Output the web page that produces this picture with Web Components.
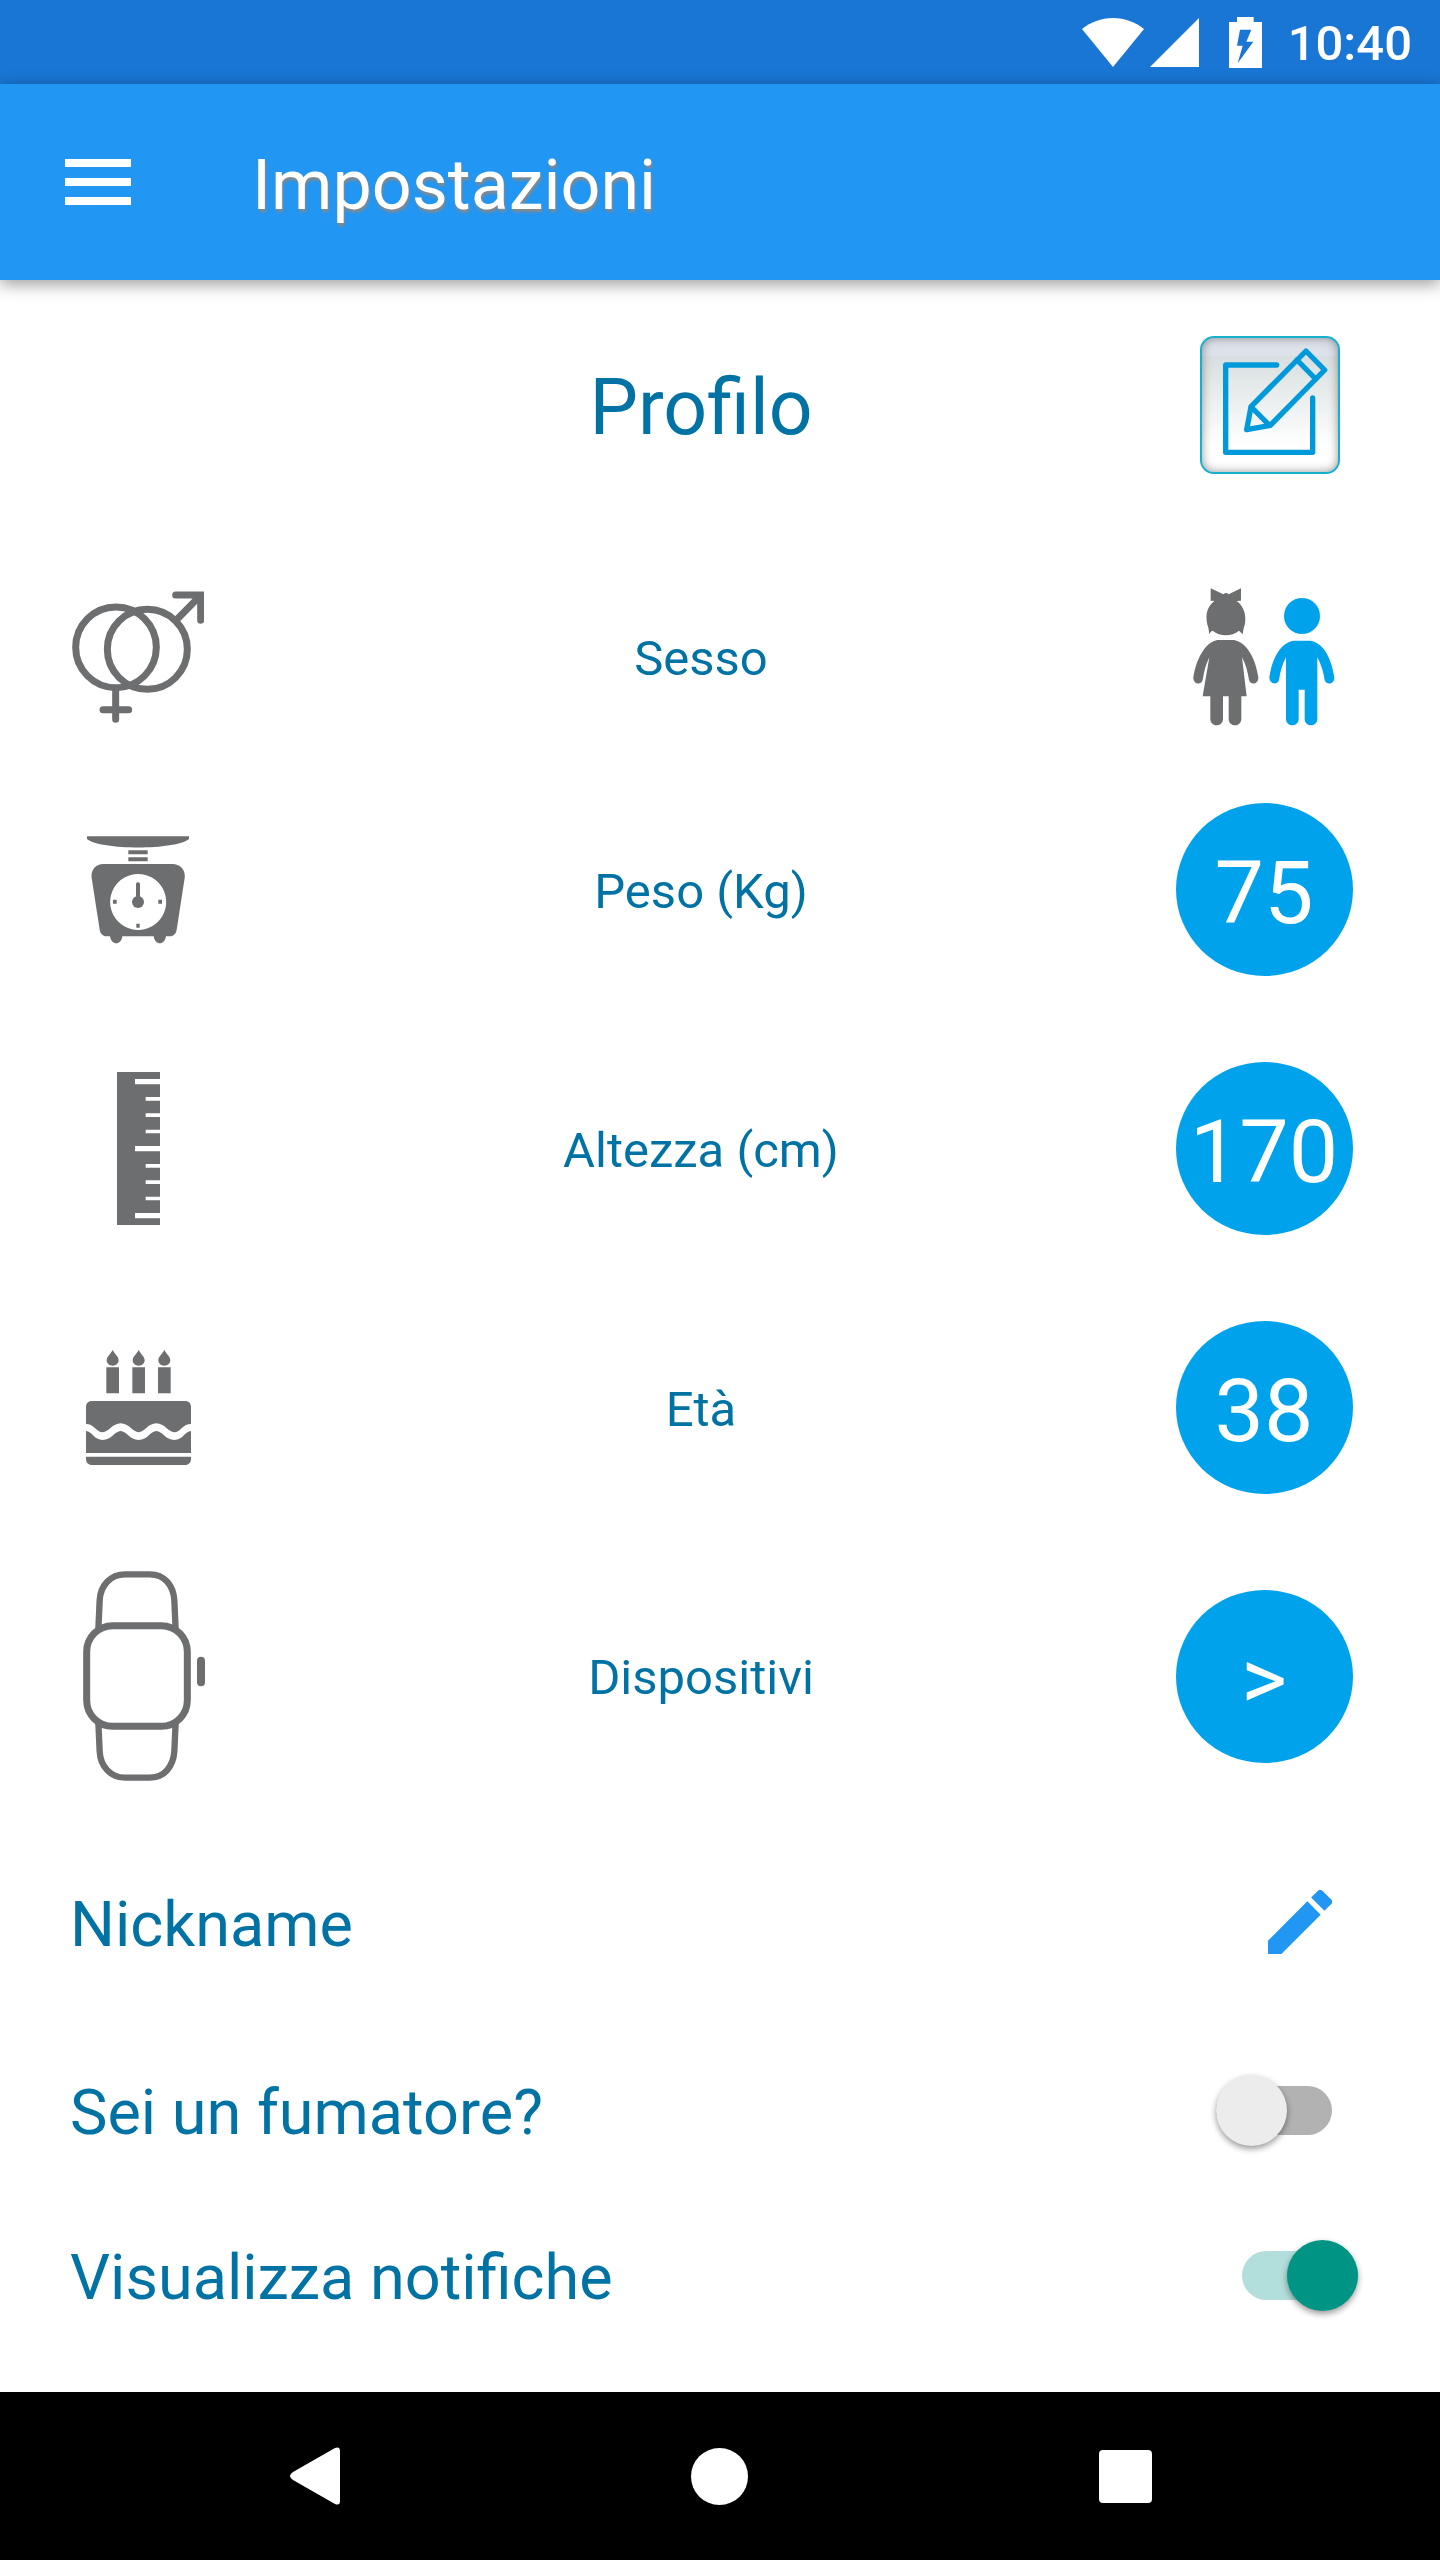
<!DOCTYPE html>
<html lang="it">
<head>
<meta charset="utf-8">
<meta name="viewport" content="width=device-width, initial-scale=1">
<title>Impostazioni</title>
<style>
  body {
    margin: 0;
    background: #fff;
    font-family: Roboto, "Noto Sans", sans-serif;
  }
</style>
</head>
<body>
<settings-app></settings-app>

<script>
const html = String.raw;

const ICONS = {
  wifi: {
    w: 62, h: 49, box: '0 0 62 49',
    body: '<path d="M31 49L0 11C9 4 19 0 31 0s22 4 31 11z"/>'
  },
  signal: {
    w: 49, h: 49, box: '0 0 49 49',
    body: '<path d="M0 49L49 0v49z"/>'
  },
  battery: {
    w: 33, h: 51, box: '507 48 99 153',
    body: '<path fill-rule="evenodd" d="M531 48h50v15h25v138h-99V63h24zM540 86l-9 48h17l-15 53 47-65h-21l15-36z"/>'
  },
  menu: {
    w: 66, h: 47, box: '0 0 66 47',
    body: '<path d="M0 0h66v8H0zM0 19h66v8H0zM0 38h66v8H0z"/>'
  },
  // fills the whole button, the drawing sits up and to the right in it
  compose: {
    w: 136, h: 134, box: '126 83 408 402',
    body: html`<g fill="none" stroke="currentColor" stroke-width="16" stroke-linecap="round" stroke-linejoin="round">
      <path d="M350 164H197v262h261V263"/>
      <path d="M438 122l56 57-163 166-71 13 13-69z"/>
      <path d="M411 149l56 57M274 290l52 53"/>
    </g>`
  },
  gender: {
    w: 132, h: 132, box: '69 61 396 396',
    body: html`<g fill="none" stroke="currentColor" stroke-width="21" stroke-linecap="round">
      <circle cx="201" cy="230" r="121"/>
      <circle cx="295" cy="236" r="120"/>
      <path d="M200 358v88M162 417h77M385 145l66-67M380 73h75v76"/>
    </g>`
  },
  kids: {
    w: 142, h: 138, box: '71 53 426 414',
    body: html`
      <path d="M124 54l38 18c5-5 11-5 16 0l37-18v37l-13 1c16 12 26 30 26 52 0 15-2 22-5 30l-3 18-11-11c-22 18-57 18-79 0-5 2-7 5-10 11l-3-20c-10-30-8-60 18-80l-11-1z"/>
      <path d="M144 209h50c42 8 66 62 73 112 1 21-23 25-28 8-4-26-10-48-21-68l14 117h-16v69c-2 24-36 24-38 0v-69h-17v69c-2 24-36 24-38 0v-69h-23l20-117c-10 20-16 42-20 68-5 17-29 13-28-8 8-50 32-104 72-112z"/>
      <g fill="#00a3eb">
        <circle cx="398" cy="137" r="54"/>
        <path d="M373 211h50c42 6 65 60 72 110 1 21-24 25-29 8-4-25-11-48-22-68v186c-2 24-36 24-38 0v-89h-18v89c-2 24-36 24-38 0V261c-11 20-17 43-21 68-5 17-29 13-29-8 7-50 31-104 73-110z"/>
      </g>`
  },
  scale: {
    w: 102, h: 108, box: '84 77 306 324',
    body: html`
      <path d="M84 78h306v8c-40 34-266 34-306 0z"/>
      <path d="M208 120h58v12h-58zM208 141h58v12h-58z"/>
      <path fill-rule="evenodd" d="M133 161h207c25 1 40 18 37 42l-24 155c-2 12-9 20-22 20h-10c-4 28-33 28-37 0h-94c-3 28-33 28-37 0h-9c-12 0-20-8-22-20L98 203c-3-24 11-41 35-42zM237 191a84 84 0 1 0 1 0z"/>
      <path d="M162 268h11v12h-11zM298 268h11v12h-11zM232 340h10v12h-10z"/>
      <circle cx="237" cy="275" r="18"/>
      <path d="M231 221c1-7 11-7 12 0v45h-12z"/>`
  },
  ruler: {
    w: 43, h: 153, box: '171 66 129 459',
    body: html`<path d="M171 66h129v21h-75v16h75v38h-43v11h43v38h-43v11h43v38h-43v11h43v38h-75v16h75v38h-43v11h43v38h-43v11h43v38h-43v11h43v38h-75v16h75v20H171z"/>`
  },
  cake: {
    w: 105, h: 115, box: '78 60 315 345',
    body: html`
      <path d="M158 60c7 13 18 20 18 31 0 9-7 16-18 16s-18-7-18-16c0-11 11-18 18-31zM236 60c7 13 18 20 18 31 0 9-7 16-18 16s-18-7-18-16c0-11 11-18 18-31zM313 60c7 13 18 20 18 31 0 9-7 16-18 16s-18-7-18-16c0-11 11-18 18-31z"/>
      <path d="M139 112h38v78h-38zM217 112h38v78h-38zM294 112h38v78h-38z"/>
      <path d="M96 213h279c11 0 18 7 18 18v51c-26 0-32 25-50 25s-29-27-54-27-36 27-53 27-29-27-54-27-36 27-54 27-25-25-50-25v-51c0-11 7-18 18-18z"/>
      <path d="M78 303c18 0 24 27 50 27 27 0 36-27 54-27s27 27 54 27 35-27 53-27 28 27 54 27 32-27 50-27v66H78z"/>
      <path d="M78 380h315v7c0 11-7 18-18 18H96c-11 0-18-7-18-18z"/>`
  },
  // the box is wider on the left, so that the case and not the crown is centred
  watch: {
    w: 134, h: 210, box: '33 66 402 630',
    body: html`<g fill="none" stroke="currentColor" stroke-width="21">
      <rect x="80" y="230" width="302" height="302" rx="78"/>
      <path stroke-width="19" d="M115 242l4-88c2-45 33-78 76-78h75c43 0 70 33 73 78l4 88M115 520l4 87c2 45 33 79 76 79h75c43 0 70-34 73-79l4-87"/>
      <path stroke-width="24" stroke-linecap="round" d="M423 335v65"/>
    </g>`
  },
  pencil: {
    w: 64, h: 64, box: '3 3 18 18',
    body: '<path d="M3 17.25V21h3.75L17.81 9.94l-3.75-3.75L3 17.25zM20.71 7.04a1 1 0 0 0 0-1.41l-2.34-2.34a1 1 0 0 0-1.41 0l-1.83 1.83 3.75 3.75 1.83-1.83z"/>'
  },
  back: {
    w: 50, h: 58, box: '0 0 50 58',
    body: '<path d="M3 25L45 1q5-2 5 3v50q0 5-5 3L3 33q-6-4 0-8z"/>'
  },
  home: {
    w: 57, h: 57, box: '0 0 57 57',
    body: '<circle cx="28.5" cy="28.5" r="28.5"/>'
  },
  recent: {
    w: 53, h: 53, box: '0 0 53 53',
    body: '<rect width="53" height="53" rx="4"/>'
  }
};

class AppIcon extends HTMLElement {

  constructor() {
    super();
    this.attachShadow({ mode: 'open' });
  }

  connectedCallback() {
    const icon = ICONS[this.getAttribute('name')];
    this.shadowRoot.innerHTML = html`
      <style>
        :host {
          display: block;
          flex: none;
        }
        svg {
          display: block;
        }
      </style>
      <svg width="${icon.w}" height="${icon.h}" viewBox="${icon.box}" fill="currentColor" aria-hidden="true">${icon.body}</svg>
    `;
  }
}

class StatusBar extends HTMLElement {

  TEMPLATE = html`
    <style>
      :host {
        display: flex;
        align-items: center;
        justify-content: flex-end;
        height: 84px;
        padding-right: 28px;
        background: #1976d4;
        color: #fff;
        font-size: 49px;
        font-weight: 500;
        line-height: 58px;
      }
      .signal {
        margin-left: 6px;
      }
      .battery {
        margin: 0 26px 0 30px;
      }
      time {
        padding-top: 4px;
      }
    </style>
    <app-icon name="wifi"></app-icon>
    <app-icon class="signal" name="signal"></app-icon>
    <app-icon class="battery" name="battery"></app-icon>
    <time><slot></slot></time>
  `

  constructor() {
    super();
    this.attachShadow({ mode: 'open' });
    this.shadowRoot.innerHTML = this.TEMPLATE;
  }
}

class AppToolbar extends HTMLElement {

  TEMPLATE = html`
    <style>
      :host {
        display: flex;
        align-items: center;
        height: 196px;
        background: #2196f3;
        color: #fff;
        box-shadow: 0 4px 16px rgba(0, 0, 0, 0.4);
      }
      button {
        display: flex;
        justify-content: center;
        width: 196px;
        padding: 24px 0;
        border: 0;
        background: none;
        color: inherit;
      }
      h1 {
        margin: 0 0 0 56px;
        padding-top: 6px;
        font-size: 70px;
        font-weight: 400;
        line-height: 82px;
        text-shadow: 1px 3px 3px #888;
      }
    </style>
    <button type="button" aria-label="Menu"><app-icon name="menu"></app-icon></button>
    <h1><slot></slot></h1>
  `

  constructor() {
    super();
    this.attachShadow({ mode: 'open' });
    this.shadowRoot.innerHTML = this.TEMPLATE;
  }
}

class ProfileHeader extends HTMLElement {

  TEMPLATE = html`
    <style>
      :host {
        display: grid;
        grid-template-columns: 276px 1fr 276px;
        align-items: center;
        padding-right: 38px;
        color: #0072a3;
      }
      h2 {
        grid-column: 2;
        margin: 0;
        padding-top: 6px;
        font-size: 77px;
        font-weight: 400;
        line-height: 90px;
        text-align: center;
      }
      button {
        display: flex;
        align-items: center;
        justify-content: center;
        justify-self: end;
        width: 140px;
        height: 138px;
        margin-right: 62px;
        padding: 0;
        border: 2px solid #17b0cc;
        border-radius: 14px;
        background: linear-gradient(#dde1ea 13%, #d8dfe0 14%, #fff 80%);
        box-shadow: inset 0 0 10px rgba(80, 80, 80, 0.6);
        color: #0099da;
      }
    </style>
    <h2><slot></slot></h2>
    <button type="button" aria-label="Modifica profilo"><app-icon name="compose"></app-icon></button>
  `

  constructor() {
    super();
    this.attachShadow({ mode: 'open' });
    this.shadowRoot.innerHTML = this.TEMPLATE;
  }
}

class ProfileRow extends HTMLElement {

  TEMPLATE = html`
    <style>
      :host {
        display: grid;
        grid-template-columns: 276px 1fr 276px;
        align-items: center;
        justify-items: center;
        padding-right: 38px;
        color: #6d6e70;
      }
      .label {
        padding-top: 4px;
        color: #0072a3;
        font-size: 49px;
        line-height: 58px;
      }
    </style>
    <slot name="icon"></slot>
    <span class="label"><slot></slot></span>
    <slot name="value"></slot>
  `

  constructor() {
    super();
    this.attachShadow({ mode: 'open' });
    this.shadowRoot.innerHTML = this.TEMPLATE;
  }
}

class RoundButton extends HTMLElement {

  TEMPLATE = html`
    <style>
      :host {
        display: block;
      }
      button {
        display: block;
        width: 177px;
        height: 173px;
        padding: 6px 0 0;
        border: 0;
        border-radius: 50%;
        background: #00a3eb;
        color: #fff;
        font: inherit;
        font-size: 88px;
        line-height: 104px;
      }
    </style>
    <button type="button"><slot></slot></button>
  `

  constructor() {
    super();
    this.attachShadow({ mode: 'open' });
    this.shadowRoot.innerHTML = this.TEMPLATE;
  }
}

class OptionRow extends HTMLElement {

  TEMPLATE = html`
    <style>
      :host {
        display: flex;
        align-items: center;
        justify-content: space-between;
        padding: 0 108px 0 70px;
        color: #0072a3;
        font-size: 63px;
        line-height: 74px;
      }
      label, span {
        padding-top: 6px;
      }
      button {
        padding: 0;
        border: 0;
        background: none;
        color: #2196f3;
      }
      input {
        appearance: none;
        display: flex;
        align-items: center;
        width: 116px;
        height: 49px;
        margin: 0;
        border-radius: 25px;
        background: #b2b2b2;
      }
      input::before {
        content: "";
        flex: none;
        width: 71px;
        height: 71px;
        border-radius: 50%;
        background: #ececec;
        box-shadow: 0 3px 6px rgba(0, 0, 0, 0.4);
      }
      input:checked {
        justify-content: flex-end;
        background: #b2dfdb;
      }
      input:checked::before {
        background: #009485;
      }
    </style>
  `

  constructor() {
    super();
    this.attachShadow({ mode: 'open' });
  }

  connectedCallback() {
    const checked = this.hasAttribute('checked') ? 'checked' : '';
    if (this.getAttribute('type') === 'switch') {
      this.shadowRoot.innerHTML = this.TEMPLATE + html`
        <label for="toggle"><slot></slot></label>
        <input id="toggle" type="checkbox" role="switch" ${checked}>
      `;
    } else {
      this.shadowRoot.innerHTML = this.TEMPLATE + html`
        <span><slot></slot></span>
        <button type="button" aria-label="Modifica nickname"><app-icon name="pencil"></app-icon></button>
      `;
    }
  }
}

class NavigationBar extends HTMLElement {

  TEMPLATE = html`
    <style>
      :host {
        display: grid;
        grid-template-columns: repeat(3, 1fr);
        align-items: center;
        justify-items: center;
        height: 168px;
        padding: 0 112px;
        background: #000;
      }
      button {
        padding: 0;
        border: 0;
        background: none;
        color: #fff;
      }
    </style>
    <button type="button" aria-label="Indietro"><app-icon name="back"></app-icon></button>
    <button type="button" aria-label="Home"><app-icon name="home"></app-icon></button>
    <button type="button" aria-label="Recenti"><app-icon name="recent"></app-icon></button>
  `

  constructor() {
    super();
    this.attachShadow({ mode: 'open' });
    this.shadowRoot.innerHTML = this.TEMPLATE;
  }
}

class SettingsApp extends HTMLElement {

  TEMPLATE = html`
    <style>
      :host {
        display: flex;
        flex-direction: column;
        min-height: 100vh;
      }
      main {
        flex: 1;
      }
      profile-header {
        min-height: 250px;
        margin-bottom: 24px;
      }
      profile-row {
        min-height: 259px;
      }
      .sex {
        min-height: 206px;
      }
      .devices {
        min-height: 278px;
      }
      option-row {
        min-height: 162px;
      }
      .nickname {
        min-height: 214px;
      }
      .notifications {
        min-height: 168px;
        padding-right: 82px;
      }
    </style>
    <status-bar>10:40</status-bar>
    <app-toolbar>Impostazioni</app-toolbar>
    <main>
      <profile-header>Profilo</profile-header>
      <profile-row class="sex">
        <app-icon slot="icon" name="gender"></app-icon>
        Sesso
        <app-icon slot="value" name="kids"></app-icon>
      </profile-row>
      <profile-row>
        <app-icon slot="icon" name="scale"></app-icon>
        Peso (Kg)
        <round-button slot="value">75</round-button>
      </profile-row>
      <profile-row>
        <app-icon slot="icon" name="ruler"></app-icon>
        Altezza (cm)
        <round-button slot="value">170</round-button>
      </profile-row>
      <profile-row>
        <app-icon slot="icon" name="cake"></app-icon>
        Età
        <round-button slot="value">38</round-button>
      </profile-row>
      <profile-row class="devices">
        <app-icon slot="icon" name="watch"></app-icon>
        Dispositivi
        <round-button slot="value">&gt;</round-button>
      </profile-row>
      <option-row class="nickname">Nickname</option-row>
      <option-row type="switch">Sei un fumatore?</option-row>
      <option-row class="notifications" type="switch" checked>Visualizza notifiche</option-row>
    </main>
    <navigation-bar></navigation-bar>
  `

  constructor() {
    super();
    this.attachShadow({ mode: 'open' });
    this.shadowRoot.innerHTML = this.TEMPLATE;
  }
}

window.customElements.define('app-icon', AppIcon);
window.customElements.define('status-bar', StatusBar);
window.customElements.define('app-toolbar', AppToolbar);
window.customElements.define('profile-header', ProfileHeader);
window.customElements.define('profile-row', ProfileRow);
window.customElements.define('round-button', RoundButton);
window.customElements.define('option-row', OptionRow);
window.customElements.define('navigation-bar', NavigationBar);
window.customElements.define('settings-app', SettingsApp);
</script>
</body>
</html>
